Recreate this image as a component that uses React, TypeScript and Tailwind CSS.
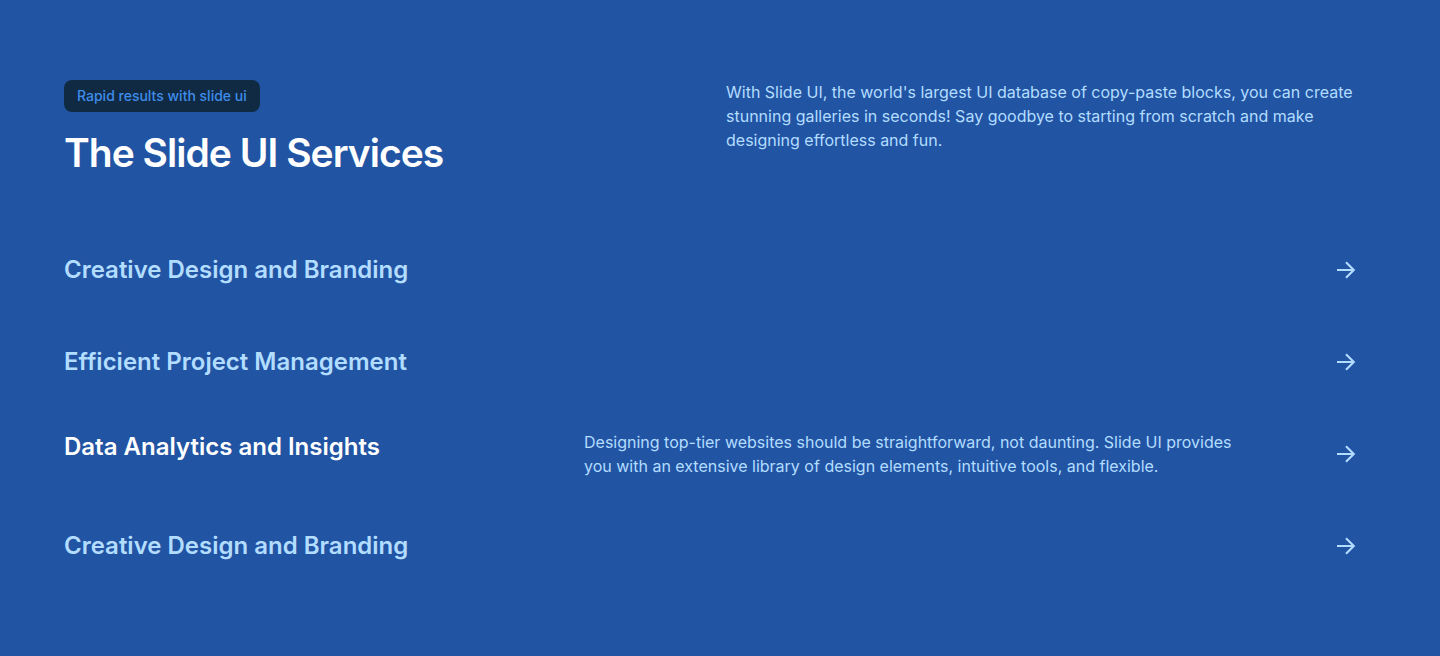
import { useState } from "react";

const detail =
  "Designing top-tier websites should be straightforward, not daunting. Slide UI provides you with an extensive library of design elements, intuitive tools, and flexible.";

const services = [
  "Creative Design and Branding",
  "Efficient Project Management",
  "Data Analytics and Insights",
  "Creative Design and Branding",
];

function Arrow() {
  return (
    <svg
      className="size-6"
      viewBox="0 0 24 24"
      fill="none"
      stroke="currentColor"
      strokeWidth="2.1"
      aria-hidden="true"
    >
      <path d="M3 12h16.5M12 4.2l7.8 7.8-7.8 7.8" />
    </svg>
  );
}

export default function App() {
  const [active, setActive] = useState(2);
  return (
    <main className="min-h-screen bg-[#2254a4] px-16 py-20 font-['Inter',sans-serif] text-[#b2ddff]">
      <header className="grid grid-cols-2 gap-3">
        <div>
          <p className="inline-block rounded-lg bg-[#102a43] px-[13px] py-1.5 text-sm leading-5 font-medium text-[#3f8cea]">
            Rapid results with slide ui
          </p>
          <h1 className="mt-4 text-[39px] leading-[50px] font-semibold tracking-tight text-white">
            The Slide UI Services
          </h1>
        </div>
        <p className="text-base leading-6">
          With Slide UI, the world's largest UI database of copy-paste blocks, you can create stunning galleries in
          seconds! Say goodbye to starting from scratch and make designing effortless and fun.
        </p>
      </header>
      <ul className="mt-[46px]">
        {services.map((name, i) => (
          <li key={i}>
            <button
              type="button"
              aria-expanded={active === i}
              onClick={() => setActive(i)}
              className="flex h-23 w-full cursor-pointer items-center pr-[18px] text-left"
            >
              <span
                className={
                  active === i
                    ? "w-[520px] shrink-0 self-start pt-5 text-2xl leading-[38px] font-semibold text-white"
                    : "w-[520px] shrink-0 text-2xl leading-10 font-semibold"
                }
              >
                {name}
              </span>
              {active === i && <span className="max-w-[664px] text-base leading-6">{detail}</span>}
              <span className="ml-auto">
                <Arrow />
              </span>
            </button>
          </li>
        ))}
      </ul>
    </main>
  );
}
